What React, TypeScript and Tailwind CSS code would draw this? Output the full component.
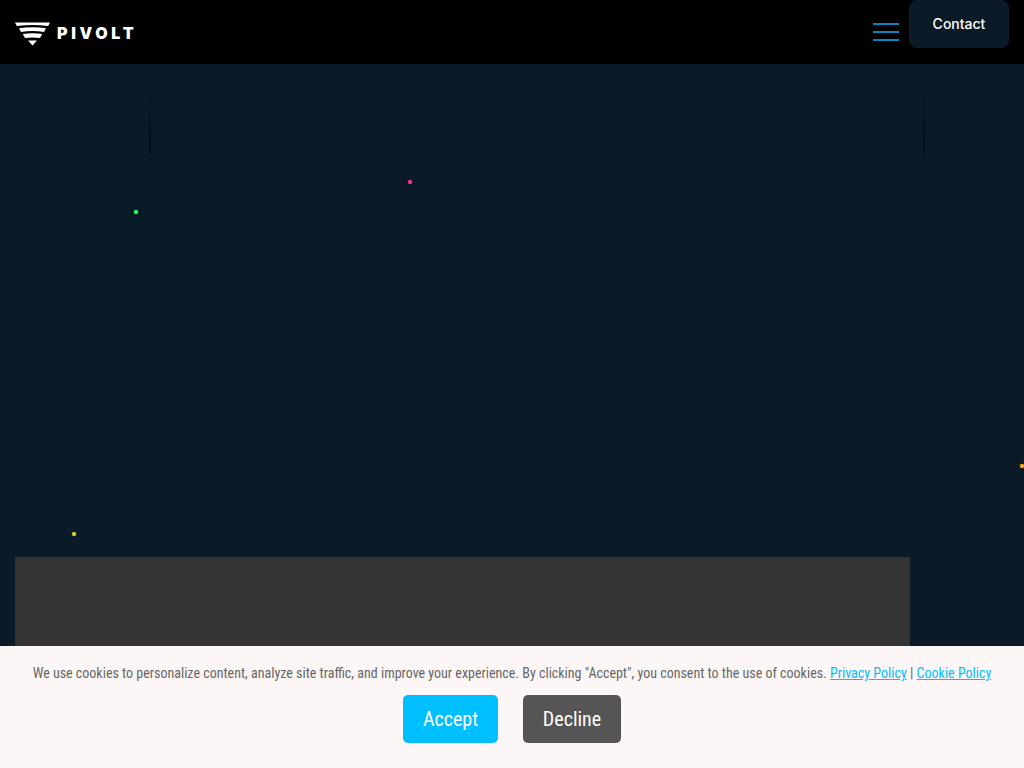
export default function App() {
  return (
    <div className="relative flex h-[768px] flex-col overflow-hidden bg-[#0b1a27] font-['Inter',sans-serif]">
      <header className="flex h-16 shrink-0 items-start justify-between bg-black pl-[15px] pr-[15px]">
        <div className="mt-[22px] flex items-center gap-[7px]">
          <svg width="35" height="24" viewBox="0 0 35 24" fill="#fff">
            <path d="M0 0.5 H35 L33.2 4 Q17.5 1.8 1.8 4 Z" />
            <path d="M4 6.2 Q17.5 4.2 31 6.2 L29 10 Q17.5 8.2 6 10 Z" />
            <path d="M7.8 12 Q17.5 10.6 27.2 12 L25 16 Q17.5 14.8 10 16 Z" />
            <path d="M13 18.6 H22 L17.5 23.6 Z" />
          </svg>
          <span className="mb-[2px] text-[16px] leading-[22px] font-black tracking-[3.7px] text-white">PIVOLT</span>
        </div>
        <div className="flex items-start gap-[10px]">
          <div className="mt-[23px] flex w-[26px] flex-col gap-[6px]">
            <span className="h-[2px] bg-[#0a84c1]" />
            <span className="h-[2px] bg-[#0a84c1]" />
            <span className="h-[2px] bg-[#0a84c1]" />
          </div>
          <button className="h-[48px] w-[100px] rounded-lg border border-[#0d1c28] bg-[#0b1a27] text-sm font-medium text-white">Contact</button>
        </div>
      </header>

      <main className="flex flex-1 flex-col justify-end pl-[15px]">
        <div className="h-[211px] w-[895px] bg-[#333333]" />
      </main>

      <div className="absolute left-[149px] top-[95px] h-[59px] w-[2px] bg-gradient-to-b from-[#0a1724] via-[#07121f] to-[#050d18]" />
      <div className="absolute left-[923px] top-[95px] h-[59px] w-[2px] bg-gradient-to-b from-[#0a1724] via-[#07121f] to-[#050d18]" />
      <div className="absolute left-[408px] top-[180px] h-1 w-1 rounded-full bg-[#ff2d92] shadow-[0_0_1px_#ff2d92]" />
      <div className="absolute left-[134px] top-[210px] h-1 w-1 rounded-full bg-[#22ff66] shadow-[0_0_1px_#22ff66]" />
      <div className="absolute left-[1020px] top-[464px] h-1 w-1 rounded-full bg-[#f5a623] shadow-[0_0_1px_#f5a623]" />
      <div className="absolute left-[72px] top-[532px] h-1 w-1 rounded-full bg-[#d8c93a] shadow-[0_0_1px_#d8c93a]" />

      <div className="absolute inset-x-0 bottom-0 flex h-[122px] flex-col items-center bg-[#fcf6f6] pt-[17px] font-['Roboto',sans-serif] [font-stretch:75%]">
        <p className="text-sm leading-[20px] text-[#666666]">
          We use cookies to personalize content, analyze site traffic, and improve your experience. By clicking "Accept", you consent to the use of cookies.{" "}
          <a className="text-[#00bfff] underline">Privacy Policy</a> | <a className="text-[#00bfff] underline">Cookie Policy</a>
        </p>
        <div className="mt-[12px] flex gap-[25px]">
          <button className="h-[48px] w-[95px] rounded-[5px] bg-[#00bfff] text-xl text-white">Accept</button>
          <button className="h-[48px] w-[98px] rounded-[5px] bg-[#555555] text-xl text-white">Decline</button>
        </div>
      </div>
    </div>
  );
}
